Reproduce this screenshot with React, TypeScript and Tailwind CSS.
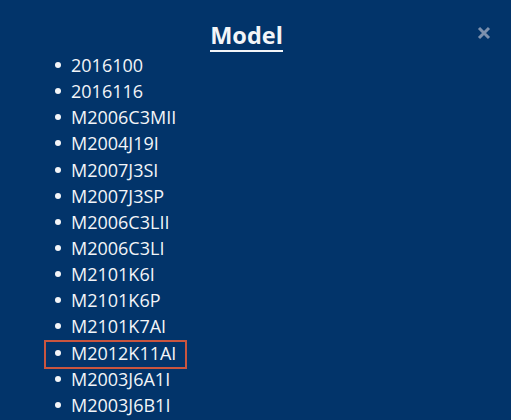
const models = [
  '2016100',
  '2016116',
  'M2006C3MII',
  'M2004J19I',
  'M2007J3SI',
  'M2007J3SP',
  'M2006C3LII',
  'M2006C3LI',
  'M2101K6I',
  'M2101K6P',
  'M2101K7AI',
  'M2012K11AI',
  'M2003J6A1I',
  'M2003J6B1I',
]

export default function App() {
  return (
    <main
      className="relative h-[420px] w-[511px] overflow-hidden bg-[#02346a] text-[#f3f5f8]"
      style={{ fontFamily: '"Open Sans", "Liberation Sans", sans-serif' }}
    >
      <button className="absolute right-[20px] top-[26px] p-0" aria-label="Close">
        <svg width="14" height="14" viewBox="0 0 14 14">
          <path d="M2 2 L12 12 M12 2 L2 12" stroke="#7d90ad" strokeWidth="3" strokeLinecap="butt" />
        </svg>
      </button>

      <div className="pr-[18px] pt-[20px] text-center">
        <h2 className="inline-block border-b-2 border-[#f3f5f8] text-[23.5px] font-bold leading-[30px]">Model</h2>
      </div>

      <ul className="pl-[55px]">
        {models.map((m) => (
          <li key={m} className="relative flex h-[26.15px] items-center text-[18px] leading-[26.15px]">
            {m === 'M2012K11AI' && (
              <span className="absolute left-[-11px] top-0 h-[29px] w-[143px] border-2 border-[#c9553f]" />
            )}
            <span className="mr-[10px] h-[6px] w-[6px] shrink-0 rounded-full bg-[#f3f5f8]" />
            <span>{m}</span>
          </li>
        ))}
      </ul>
    </main>
  )
}
